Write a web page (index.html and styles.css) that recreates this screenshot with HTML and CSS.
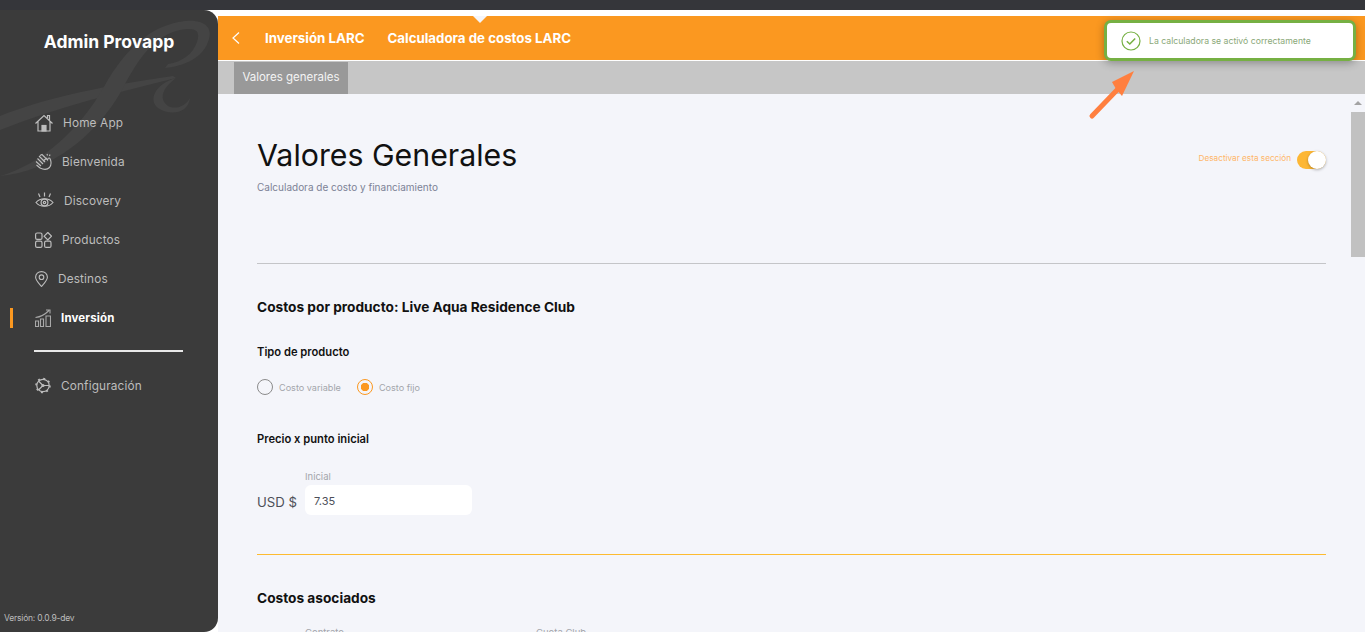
FILE: index.html
```html
<!DOCTYPE html>
<html lang="en">
<head>
    <meta charset="UTF-8">
    <title>Admin Provapp</title>
    <link rel="stylesheet" href="styles.css">
</head>
<body>
    <div class="browser-edge"></div>
    <div class="app">
        <aside class="sidebar">
            <svg class="watermark" width="218" height="170" viewBox="0 10 218 170" fill="#444444">
                <path d="M0 116C40 100 90 88 173 76L176 78C120 92 60 106 0 130Z"/>
                <path d="M0 176C40 165 80 130 105 85C125 50 150 25 185 21C205 19 214 28 208 42C202 58 185 66 165 68L168 64C182 62 193 54 197 42C201 30 195 27 180 30C155 36 140 55 122 90C97 135 50 172 0 176Z"/>
                <path d="M176 78C155 84 148 100 158 108C170 116 188 114 190 98C186 106 176 110 168 106C160 100 160 90 176 78Z"/>
            </svg>
            <h1 class="brand">Admin Provapp</h1>
            <nav class="nav">
                <a class="nav-item">
                    <svg width="18" height="18" viewBox="0 0 18 18" fill="none" stroke="#bdbdbd" stroke-width="1.2"><path d="M0.500 9.500L9 1.500L17.500 9.500M3 7.500V17H15V7.500M12.500 4V1.500H14.500V6"/><rect x="7" y="11.500" width="4" height="5.500" fill="#bdbdbd"/></svg>
                    <span>Home App</span>
                </a>
                <a class="nav-item">
                    <svg width="17" height="17" viewBox="0 0 17 17" fill="none" stroke="#bdbdbd" stroke-width="1.1"><path d="M4 3L10 9M2.500 5.500L8 11M1 8.500L6 13M1.500 12L5 15M5 2.500L7 1.500L12.500 7C13 5 14 4.500 15 5.500"/><path d="M8 8L12 5M15 5.500C16.500 9 16.500 12 14.500 14.500C12 17 8 16.500 5 15"/><path d="M12 1L12.500 2.500M15 1.500L14.500 3"/></svg>
                    <span>Bienvenida</span>
                </a>
                <a class="nav-item">
                    <svg width="19" height="17" viewBox="0 0 19 17" fill="none" stroke="#bdbdbd" stroke-width="1.2"><path d="M1 10.500C5 5.500 14 5.500 18 10.500C14 15.500 5 15.500 1 10.500Z"/><circle cx="9.500" cy="10.500" r="3.400"/><circle cx="9.500" cy="10.500" r="1.200"/><path d="M9.500 0.500V4.500M3.500 1.500L5 5M15.500 1.500L14 5"/></svg>
                    <span>Discovery</span>
                </a>
                <a class="nav-item">
                    <svg width="17" height="16" viewBox="0 0 17 16" fill="none" stroke="#bdbdbd" stroke-width="1.2"><rect x="0.600" y="1" width="6.400" height="6.400" rx="1.500"/><rect x="0.600" y="9.200" width="6.400" height="6.200" rx="1.500"/><rect x="9.600" y="9.200" width="6.400" height="6.200" rx="1.500"/><path d="M12.800 0.500L16.500 4.200L12.800 7.900L9.100 4.200Z"/></svg>
                    <span>Productos</span>
                </a>
                <a class="nav-item">
                    <svg width="13" height="16" viewBox="0 0 13 16" fill="none" stroke="#bdbdbd" stroke-width="1.1"><path d="M6.500 15.500C3 11.500 0.600 9 0.600 6.200C0.600 3 3.200 0.600 6.500 0.600C9.800 0.600 12.400 3 12.400 6.200C12.400 9 10 11.500 6.500 15.500Z"/><circle cx="6.500" cy="6.200" r="2.300"/></svg>
                    <span>Destinos</span>
                </a>
                <a class="nav-item active">
                    <svg width="16" height="18" viewBox="0 0 16 18" fill="none" stroke="#a8a8a8" stroke-width="1.100"><path d="M0.500 8.500C5 8 10 5.500 14 1.500M11 1H15V4.500"/><path d="M0.500 17.500V12H3.500V17.500ZM5.500 17.500V10H8.500V17.500ZM11 17.500V7H15.500V17.500Z"/></svg>
                    <span>Inversión</span>
                </a>
            </nav>
            <hr class="nav-divider">
            <a class="nav-item">
                <svg width="16" height="17" viewBox="0 0 16 17" fill="none" stroke="#bdbdbd" stroke-width="1.2"><circle cx="8" cy="8.500" r="6.200"/><circle cx="8" cy="8.500" r="7" stroke-width="1.500" stroke-dasharray="2 3.500"/><path d="M3.500 4L8 8.500L3.500 13M8 8.500H14"/><circle cx="8" cy="8.500" r="1"/></svg>
                <span>Configuración</span>
            </a>
            <div class="version">Versión: 0.0.9-dev</div>
        </aside>

        <main class="main">
            <header class="topbar">
                <svg class="back" width="8" height="12" viewBox="0 0 8 12" fill="none" stroke="#ffffff" stroke-width="1.200"><path d="M7 0.500L1 6L7 11.500"/></svg>
                <span class="crumb first">Inversión LARC</span>
                <span class="crumb">Calculadora de costos LARC</span>
                <span class="notch"></span>
            </header>
            <div class="tabs">
                <span class="tab">Valores generales</span>
            </div>
            <div class="body">
                <div class="content">
                    <div class="title-row">
                        <div>
                            <h2 class="title">Valores Generales</h2>
                            <p class="subtitle">Calculadora de costo y financiamiento</p>
                        </div>
                        <div class="switch-row">
                            <span class="switch-text">Desactivar esta sección</span>
                            <span class="switch"><span class="knob"></span></span>
                        </div>
                    </div>
                    <hr class="rule">
                    <h3 class="section">Costos por producto: Live Aqua Residence Club</h3>
                    <div class="label type-label">Tipo de producto</div>
                    <div class="radios">
                        <span class="radio"><span class="dot"></span>Costo variable</span>
                        <span class="radio on"><span class="dot"></span>Costo fijo</span>
                    </div>
                    <div class="label price-label">Precio x punto inicial</div>
                    <div class="field-row">
                        <span class="currency">USD $</span>
                        <div class="field">
                            <span class="field-label">Inicial</span>
                            <div class="input">7.35</div>
                        </div>
                    </div>
                    <hr class="rule gold">
                    <h3 class="section">Costos asociados</h3>
                    <div class="assoc">
                        <span class="field-label">Contrato</span>
                        <span class="field-label">Cuota Club</span>
                    </div>
                </div>
                <div class="scrollbar">
                    <span class="scroll-up"></span>
                    <span class="scroll-thumb"></span>
                </div>
            </div>
            <div class="toast">
                <svg width="20" height="20" viewBox="0 0 20 20" fill="none" stroke="#76b043" stroke-width="1.200"><circle cx="10" cy="10" r="9"/><path d="M5.800 10.200L8.800 13L14.200 7.400" stroke-width="1.500"/></svg>
                <span>La calculadora se activó correctamente</span>
            </div>
            <svg class="arrow" width="46" height="50" viewBox="0 0 46 50" fill="none"><path d="M4 46L29 20" stroke="#ff7f3f" stroke-width="5" stroke-linecap="round"/><path d="M46 1L34 26L28 19L24 12Z" fill="#ff7f3f"/></svg>
        </main>
    </div>
</body>
</html>
```

FILE: styles.css
```css
* {
    box-sizing: border-box;
}

html, body {
    height: 100%;
}

body {
    margin: 0;
    overflow: hidden;
    background: #ffffff;
    font-family: "Inter", "Liberation Sans", sans-serif;
    display: flex;
    flex-direction: column;
}

.browser-edge {
    height: 10px;
    flex-shrink: 0;
    background: #35363a;
}

.app {
    flex: 1;
    display: flex;
    min-height: 0;
}

.sidebar {
    position: relative;
    width: 218px;
    flex-shrink: 0;
    overflow: hidden;
    background: #3b3b3b;
    border-radius: 0 14px 14px 0;
    padding-top: 22px;
}

.watermark {
    position: absolute;
    left: 0;
    top: 0;
}

.brand {
    position: relative;
    margin: 0 0 51px;
    height: 20px;
    line-height: 20px;
    text-align: center;
    color: #ffffff;
    font-size: 17.500px;
    font-weight: 700;
}

.nav {
    position: relative;
    display: flex;
    flex-direction: column;
}

.nav-item {
    position: relative;
    height: 39px;
    padding-left: 35px;
    display: flex;
    align-items: center;
    gap: 10px;
    color: #bdbdbd;
    font-size: 11.800px;
    letter-spacing: 0.15px;
}

.nav-item.active {
    color: #ffffff;
    font-weight: 700;
    font-size: 11.500px;
}

.nav-item.active::before {
    content: "";
    position: absolute;
    left: 10px;
    top: 10px;
    width: 3px;
    height: 20px;
    background: #fb9820;
}

.nav-divider {
    margin: 13px 35px 14px 34px;
    border: 0;
    height: 2px;
    background: #e8e8e8;
}

.version {
    position: absolute;
    left: 4px;
    bottom: 9px;
    color: #bdbdbd;
    font-size: 8.500px;
    letter-spacing: -0.2px;
}

.main {
    position: relative;
    flex: 1;
    min-width: 0;
    display: flex;
    flex-direction: column;
    padding-top: 6px;
}

.topbar {
    position: relative;
    height: 44px;
    flex-shrink: 0;
    background: #fb9820;
    display: flex;
    align-items: center;
    padding-left: 14px;
    color: #ffffff;
    font-size: 13.300px;
    font-weight: 700;
}

.back {
    margin-right: 25px;
}

.crumb {
    margin-right: 23px;
}

.notch {
    position: absolute;
    left: 255px;
    top: 0;
    border-left: 7px solid transparent;
    border-right: 7px solid transparent;
    border-top: 7px solid #f4f5fa;
}

.tabs {
    height: 33px;
    flex-shrink: 0;
    margin-top: 1px;
    padding: 1px 0 0 16px;
    background: #c6c6c6;
    display: flex;
}

.tab {
    width: 114px;
    background: #999999;
    color: #f4f4f4;
    font-size: 11.500px;
    line-height: 30px;
    text-align: center;
}

.body {
    flex: 1;
    min-height: 0;
    display: flex;
    background: #f4f5fa;
}

.content {
    flex: 1;
    min-width: 0;
    overflow: hidden;
    padding: 0 25px 0 39px;
}

.title-row {
    display: flex;
    justify-content: space-between;
    align-items: flex-start;
    height: 169px;
    padding-top: 42px;
}

.title {
    margin: 0;
    color: #111111;
    font-size: 30.300px;
    line-height: 38px;
    font-weight: 400;
}

.subtitle {
    margin: 7px 0 0;
    color: #7c8296;
    font-size: 10px;
    line-height: 13px;
}

.switch-row {
    display: flex;
    align-items: center;
    gap: 6px;
    margin-top: 15px;
    color: #ffb568;
    font-size: 8.200px;
}

.switch-text {
    margin-bottom: 4px;
}

.switch {
    position: relative;
    width: 29px;
    height: 18px;
    border-radius: 9px;
    background: #fdb735;
}

.knob {
    position: absolute;
    right: 0;
    top: 0;
    width: 18px;
    height: 18px;
    border-radius: 50%;
    background: #ffffff;
    box-shadow: 0 1px 3px rgba(0, 0, 0, 0.3);
}

.rule {
    margin: 0;
    border: 0;
    height: 1px;
    background: #c4c5c8;
}

.rule.gold {
    margin-top: 39px;
    background: #fdbb30;
}

.section {
    margin: 35px 0 0;
    color: #111111;
    font-size: 13.700px;
    line-height: 16px;
    font-weight: 700;
}

.label {
    color: #111111;
    font-size: 11.200px;
    line-height: 14px;
    font-weight: 600;
}

.type-label {
    margin-top: 30px;
}

.radios {
    display: flex;
    gap: 16px;
    margin-top: 20px;
    height: 16px;
    color: #a3a5ab;
    font-size: 9.100px;
}

.radio {
    display: flex;
    align-items: center;
    gap: 6px;
}

.dot {
    width: 16px;
    height: 16px;
    border-radius: 50%;
    border: 1px solid #8b8b8b;
    background: #f4f5fa;
}

.radio.on .dot {
    border-color: #fb9820;
    background: radial-gradient(circle, #fb9820 0 4px, transparent 4.500px);
}

.price-label {
    margin-top: 37px;
}

.field-row {
    display: flex;
    align-items: flex-end;
    gap: 8px;
    margin-top: 25px;
}

.currency {
    margin-bottom: -2px;
    color: #4c4f58;
    font-size: 13.200px;
    line-height: 30px;
}

.field-label {
    color: #a3a5ab;
    font-size: 9.500px;
    line-height: 12px;
}

.field .field-label {
    display: block;
    margin-bottom: 2px;
}

.input {
    width: 167px;
    height: 30px;
    border-radius: 6px;
    background: #ffffff;
    color: #4c4f58;
    font-size: 11px;
    line-height: 32px;
    padding-left: 9px;
}

.assoc {
    display: flex;
    margin-top: 21px;
    padding-left: 48px;
}

.assoc .field-label {
    width: 231px;
}

.scrollbar {
    width: 14px;
    flex-shrink: 0;
    display: flex;
    flex-direction: column;
    align-items: center;
    background: #f4f5fa;
}

.scroll-up {
    margin-top: 7px;
    border-left: 4px solid transparent;
    border-right: 4px solid transparent;
    border-bottom: 4px solid #a3a3a3;
}

.scroll-thumb {
    margin-top: 7px;
    width: 14px;
    height: 145px;
    background: #c1c1c1;
}

.toast {
    position: absolute;
    left: 886px;
    top: 10px;
    width: 252px;
    height: 41px;
    display: flex;
    align-items: center;
    gap: 8px;
    padding-left: 14px;
    background: #ffffff;
    border: 3px solid #76b043;
    border-radius: 7px;
    box-shadow: 0 2px 8px rgba(0, 0, 0, 0.3);
    color: #8aa878;
    font-size: 8.700px;
}

.arrow {
    position: absolute;
    left: 870px;
    top: 60px;
}
```
